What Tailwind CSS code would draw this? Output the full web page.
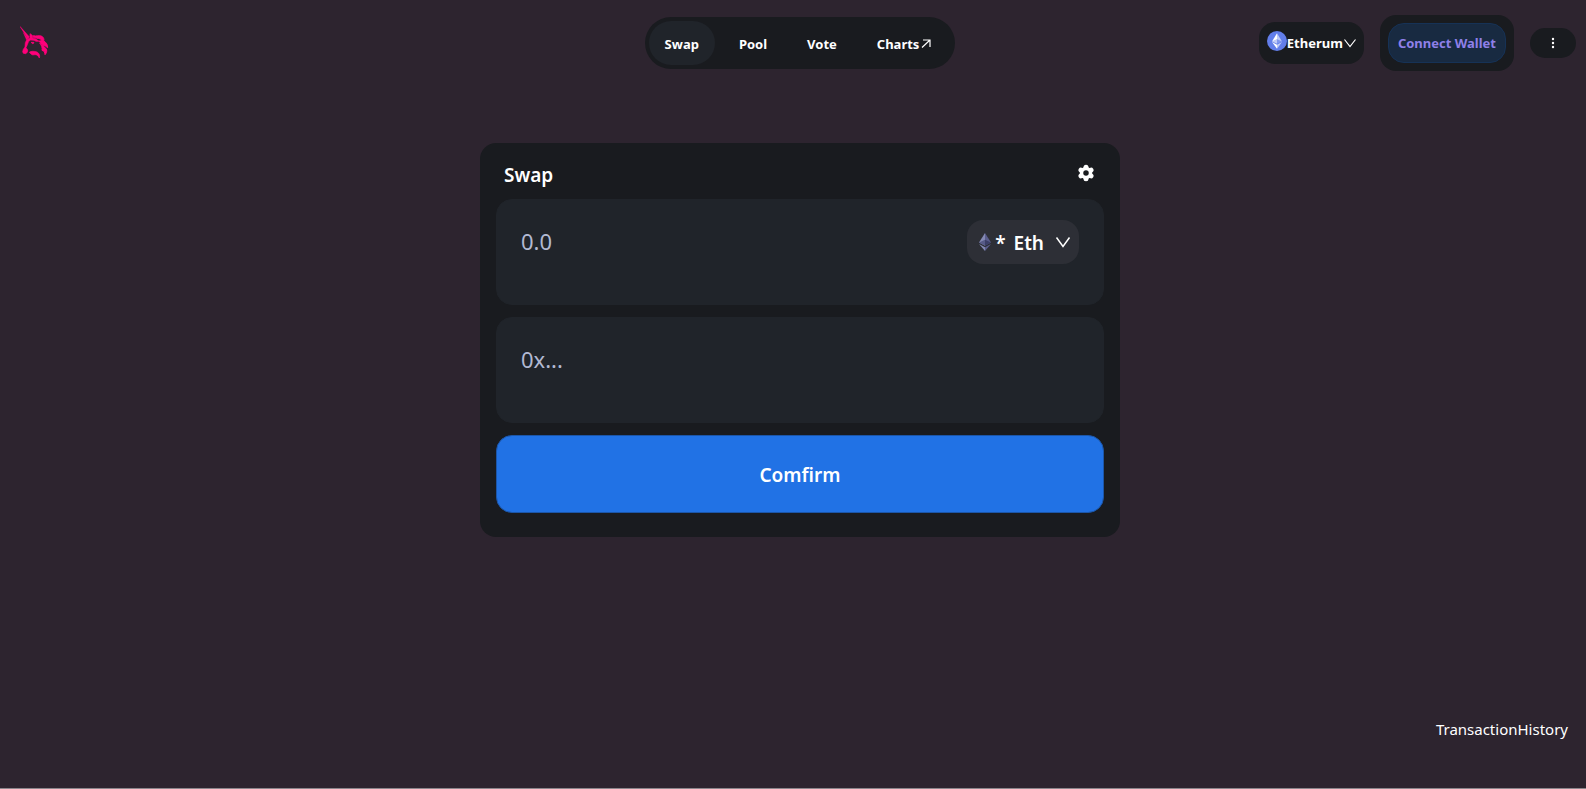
<!DOCTYPE html>
<html lang="en">
<head>
<meta charset="utf-8">
<meta name="viewport" content="width=device-width, initial-scale=1">
<title>Swap</title>
<script src="https://cdn.jsdelivr.net/npm/@tailwindcss/browser@4"></script>
</head>
<body class="flex min-h-screen flex-col border-b border-[#8b868c] bg-[#2d242f] font-['Noto_Sans','Open_Sans',sans-serif] text-white">
<header class="grid grid-cols-[1fr_auto_1fr] items-center pt-[15px] pr-[10px] pl-5">
  <a href="#" aria-label="Home" class="w-[30px]">
    <svg class="mb-0.5 h-[35px] w-[30px]" viewBox="60 39 90 105" fill="#ff007a" stroke="#ff007a" stroke-linejoin="round" aria-hidden="true">
      <path stroke-width="1" d="M59 42 L88 74 L84 82 Z"/>
      <path stroke-width="1" d="M70 62 L84 80 L80 85 Z"/>
      <path stroke-width="2" d="M90 65 L97 70 L98 78 L110 82 L116 88 L108 88 L102 85 L92 84 L86 88 L82 98 L78 107 L83 114 L82 121 L77 125 L70 124 L68 119 L70 112 L75 105 L76 92 L80 84 L90 78 Z"/>
      <path stroke-width="2" d="M93 91 L102 91 L99 96 Z"/>
      <path stroke-width="3" d="M100 71 C110 74 116 69 126 73 C131 77 133 82 131 87 C139 91 143 98 143 107 C139 103 134 101 128 99 C125 94 121 90 116 87 C124 88 126 84 121 81 C115 78 105 79 100 76 Z"/>
      <path stroke-width="3" d="M119 93 C128 103 138 106 140 114 C141 120 138 125 135 128 C135 121 132 117 126 115 C128 107 124 99 119 93 Z"/>
      <path stroke-width="2" d="M88 121 C92 117 103 117 111 120 C117 123 121 130 118 138 C115 132 111 128 106 128 C101 128 98 130 94 127 Z"/>
    </svg>
  </a>
  <nav class="ml-1 flex rounded-[26px] bg-[#191b1f] p-1 text-[13px] leading-5 font-bold" aria-label="Main">
    <a href="#" aria-current="page" class="rounded-[22px] bg-[#20242a] px-4 pt-[13px] pb-[11px]">Swap</a>
    <a href="#" class="ml-2 px-4 pt-[13px] pb-[11px]">Pool</a>
    <a href="#" class="ml-2 px-4 pt-[13px] pb-[11px]">Vote</a>
    <a href="#" class="ml-2 flex gap-0.5 pt-[13px] pr-5 pb-[11px] pl-4">Charts
      <svg class="mt-1 size-[10px]" viewBox="0 0 10 10" fill="none" stroke="currentColor" stroke-width="1.2" aria-hidden="true"><path d="M2 2h7v7M9 2L1 9.500"/></svg>
    </a>
  </nav>
  <div class="flex items-center justify-end gap-4 text-[13px] leading-5 font-bold">
    <button type="button" class="flex h-[42px] items-center rounded-[16px] bg-[#191b1f] px-2">
      <svg class="mb-1 size-5" viewBox="0 0 32 32" aria-hidden="true">
        <circle cx="16" cy="16" r="16" fill="#627eea"/>
        <path d="M16 3.500v9.500l8 3.600z" fill="#fff" fill-opacity=".6"/><path d="M16 3.500L8 16.600l8-3.600z" fill="#fff"/>
        <path d="M16 22v6.500l8-11z" fill="#fff" fill-opacity=".6"/><path d="M16 28.500V22l-8-4.500z" fill="#fff"/>
        <path d="M16 20.500l8-3.900-8-3.600z" fill="#fff" fill-opacity=".2"/><path d="M8 16.600l8 3.900V13z" fill="#fff" fill-opacity=".6"/>
      </svg>
      <span>Etherum</span>
      <svg class="ml-px h-3 w-3" viewBox="0 0 12 12" fill="none" stroke="currentColor" stroke-width="1.200" aria-hidden="true"><path d="M.5 2.500l5.500 7 5.500-7"/></svg>
    </button>
    <div class="rounded-[16px] bg-[#191b1f] p-2">
      <button type="button" class="h-10 rounded-[16px] border border-[#163256] bg-[#182a41] px-[9px] text-[#8f80e8]">Connect Wallet</button>
    </div>
    <button type="button" aria-label="More" class="flex h-[30px] w-[46px] items-center justify-center rounded-[16px] bg-[#191b1f]">
      <svg class="h-3 w-1" viewBox="0 0 4 12" fill="currentColor" aria-hidden="true"><circle cx="2" cy="2" r="1.200"/><circle cx="2" cy="6" r="1.200"/><circle cx="2" cy="10" r="1.200"/></svg>
    </button>
  </div>
</header>
<main class="mt-[72px] flex justify-center pl-[14px]">
  <form class="w-full max-w-[640px] rounded-[16px] bg-[#191b1f] px-4 pb-6">
    <div class="flex h-14 items-center justify-between px-2 pt-2">
      <h1 class="text-[19px] leading-7 font-semibold">Swap</h1>
      <button type="button" aria-label="Settings" class="mb-1">
        <svg class="size-5" viewBox="0 0 24 24" fill="none" aria-hidden="true">
          <path d="M12 3.500l7.400 4.300v8.400L12 20.500l-7.400-4.300V7.800z" fill="#fff"/>
          <path d="M12 5v14M6 8.500l12 7M6 15.500l12-7" stroke="#fff" stroke-width="6" stroke-linecap="round"/>
          <circle cx="12" cy="12" r="3.300" fill="#191b1f"/>
        </svg>
      </button>
    </div>
    <div class="flex h-[106px] items-start justify-between rounded-[16px] border border-[#20242a] bg-[#20242a] px-6 pt-5">
      <input type="text" aria-label="Amount" placeholder="0.0" class="h-[42px] min-w-0 flex-1 bg-transparent text-[22px] outline-none placeholder:text-[#b2b9d2]">
      <button type="button" class="flex h-[44px] items-center rounded-[16px] bg-[#2d2f36] px-2 text-[19px] leading-7 font-semibold">
        <svg class="h-[18px] w-5" viewBox="-1 0 20 18" aria-hidden="true">
          <path d="M9 0L3 9.500l6 3.200z" fill="#8388b3"/><path d="M9 0l6 9.500-6 3.200z" fill="#5a5d8c"/>
          <path d="M9 6.800L3 9.500l6 3.200z" fill="#575b88"/><path d="M9 6.800l6 2.700-6 3.200z" fill="#3c3f68"/>
          <path d="M3 11l6 7v-3.700z" fill="#8388b3"/><path d="M15 11l-6 7v-3.700z" fill="#5a5d8c"/>
        </svg>
        <span class="pt-0.5">*</span><span class="mx-2 pt-0.5">Eth</span>
        <svg class="ml-[3px] h-4 w-4" viewBox="0 0 16 16" fill="none" stroke="currentColor" stroke-width="1.500" aria-hidden="true"><path d="M1.500 3.500l6.500 9 6.500-9"/></svg>
      </button>
    </div>
    <div class="mt-3 h-[106px] rounded-[16px] border border-[#20242a] bg-[#20242a] px-6 pt-5">
      <input type="text" aria-label="Recipient address" placeholder="0x..." class="h-[42px] w-full bg-transparent text-[22px] outline-none placeholder:text-[#b2b9d2]">
    </div>
    <button type="submit" class="mt-3 block h-[78px] w-full rounded-[16px] border border-[#1c56a8] bg-[#2172e5] pt-0.5 text-[19px] leading-7 font-semibold">Comfirm</button>
  </form>
</main>
<footer class="mt-auto flex justify-end pr-[18px] pb-[47px]">
  <a href="#" class="text-[15px] leading-6">TransactionHistory</a>
</footer>
</body>
</html>
